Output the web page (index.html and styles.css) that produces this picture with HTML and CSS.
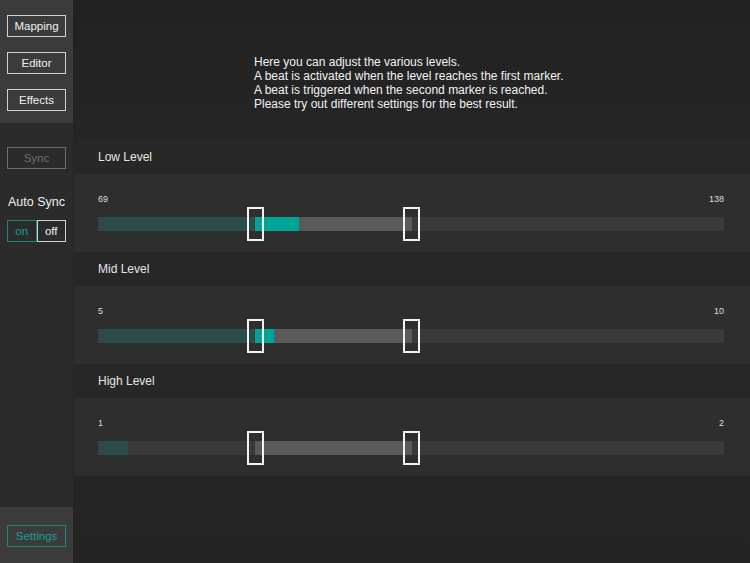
FILE: index.html
```html
<!DOCTYPE html>
<html lang="en">
<head>
    <meta charset="UTF-8">
    <meta name="viewport" content="width=device-width, initial-scale=1.0">
    <title>Beat Levels</title>
    <link rel="stylesheet" href="styles.css">
</head>
<body>
    <div class="app">
        <!-- Sidebar -->
        <div class="sidebar">
            <div class="nav-group">
                <button class="side-btn">Mapping</button>
                <button class="side-btn">Editor</button>
                <button class="side-btn">Effects</button>
            </div>
            <div class="sync-group">
                <button class="side-btn disabled">Sync</button>
                <div class="auto-label">Auto Sync</div>
                <div class="toggle">
                    <button class="toggle-btn active">on</button>
                    <button class="toggle-btn">off</button>
                </div>
            </div>
            <div class="spacer"></div>
            <div class="settings-group">
                <button class="side-btn teal">Settings</button>
            </div>
        </div>

        <!-- Main -->
        <div class="main">
            <div class="intro">
                Here you can adjust the various levels.<br>
                A beat is activated when the level reaches the first marker.<br>
                A beat is triggered when the second marker is reached.<br>
                Please try out different settings for the best result.
            </div>

            <div class="level">
                <div class="level-title">Low Level</div>
                <div class="level-panel">
                    <div class="range-labels"><span>69</span><span>138</span></div>
                    <div class="track">
                        <div class="fill dim" style="left:0;width:157px"></div>
                        <div class="fill band" style="left:157px;width:157px"></div>
                        <div class="fill live" style="left:157px;width:44px"></div>
                        <div class="marker" style="left:149px"></div>
                        <div class="marker" style="left:305px"></div>
                    </div>
                </div>
            </div>

            <div class="level">
                <div class="level-title">Mid Level</div>
                <div class="level-panel">
                    <div class="range-labels"><span>5</span><span>10</span></div>
                    <div class="track">
                        <div class="fill dim" style="left:0;width:157px"></div>
                        <div class="fill band" style="left:157px;width:157px"></div>
                        <div class="fill live" style="left:157px;width:19px"></div>
                        <div class="marker" style="left:149px"></div>
                        <div class="marker" style="left:305px"></div>
                    </div>
                </div>
            </div>

            <div class="level">
                <div class="level-title">High Level</div>
                <div class="level-panel">
                    <div class="range-labels"><span>1</span><span>2</span></div>
                    <div class="track">
                        <div class="fill dim" style="left:0;width:30px"></div>
                        <div class="fill band" style="left:157px;width:157px"></div>
                        <div class="marker" style="left:149px"></div>
                        <div class="marker" style="left:305px"></div>
                    </div>
                </div>
            </div>
        </div>
    </div>
</body>
</html>
```

FILE: styles.css
```css
:root {
    --teal: #00a497;
    --teal-dim: #2c4a4a;
    --teal-line: #1f857c;
    --side-light: #3b3b3b;
    --side-dark: #2b2b2b;
    --text: #ececec;
}

* {
    margin: 0;
    padding: 0;
    box-sizing: border-box;
    font-family: 'Liberation Sans', Arial, sans-serif;
}

body {
    background: #252525;
    color: var(--text);
}

.app {
    display: flex;
    height: 563px;
    overflow: hidden;
}

/* Sidebar */
.sidebar {
    width: 74px;
    flex-shrink: 0;
    display: flex;
    flex-direction: column;
    background: var(--side-dark);
    border-right: 1px solid #232323;
}

.nav-group {
    background: var(--side-light);
    height: 123px;
    padding-top: 15px;
    display: flex;
    flex-direction: column;
    align-items: center;
    gap: 15px;
}

.side-btn {
    width: 59px;
    height: 22px;
    background: transparent;
    border: 1.5px solid #d0d0d0;
    color: #f0f0f0;
    font-size: 11.5px;
    cursor: pointer;
}

.side-btn.disabled {
    border-color: #6e6e6e;
    color: #6e6e6e;
}

.side-btn.teal {
    border-color: var(--teal-line);
    color: #1e9c91;
}

.sync-group {
    padding-top: 24px;
    display: flex;
    flex-direction: column;
    align-items: center;
}

.auto-label {
    margin-top: 26px;
    font-size: 12.5px;
    line-height: 14px;
    color: #f0f0f0;
}

.toggle {
    display: flex;
    margin-top: 11px;
}

.toggle-btn {
    width: 29.5px;
    height: 22px;
    background: transparent;
    border: 1.5px solid #d0d0d0;
    color: #f0f0f0;
    font-size: 11.5px;
    cursor: pointer;
}

.toggle-btn.active {
    border-color: var(--teal-line);
    color: #1e9c91;
}

.spacer {
    flex: 1;
}

.settings-group {
    background: var(--side-light);
    height: 56px;
    padding-top: 18px;
    display: flex;
    justify-content: center;
}

/* Main */
.main {
    flex: 1;
    background: linear-gradient(180deg, #222 0%, #272727 40%, #242424 100%);
}

.intro {
    padding: 55px 0 0 180px;
    font-size: 12px;
    line-height: 14px;
    color: #f2f2f2;
    height: 140px;
}

.level-title {
    height: 34px;
    line-height: 34px;
    padding-left: 24px;
    font-size: 12px;
    color: #e6e6e6;
    background: #272727;
}

.level-panel {
    height: 78px;
    padding: 20px 26px 0 24px;
    background: #2e2e2e;
}

.range-labels {
    display: flex;
    justify-content: space-between;
    font-size: 9px;
    line-height: 10px;
    color: #dcdcdc;
}

.track {
    position: relative;
    height: 14px;
    margin-top: 13px;
    background: #3a3a3a;
}

.fill {
    position: absolute;
    top: 0;
    height: 100%;
}

.fill.dim {
    background: var(--teal-dim);
}

.fill.band {
    background: #5a5a5a;
}

.fill.live {
    background: var(--teal);
}

.marker {
    position: absolute;
    top: -10px;
    width: 17px;
    height: 34px;
    border: 2px solid #f4f4f4;
}
```
